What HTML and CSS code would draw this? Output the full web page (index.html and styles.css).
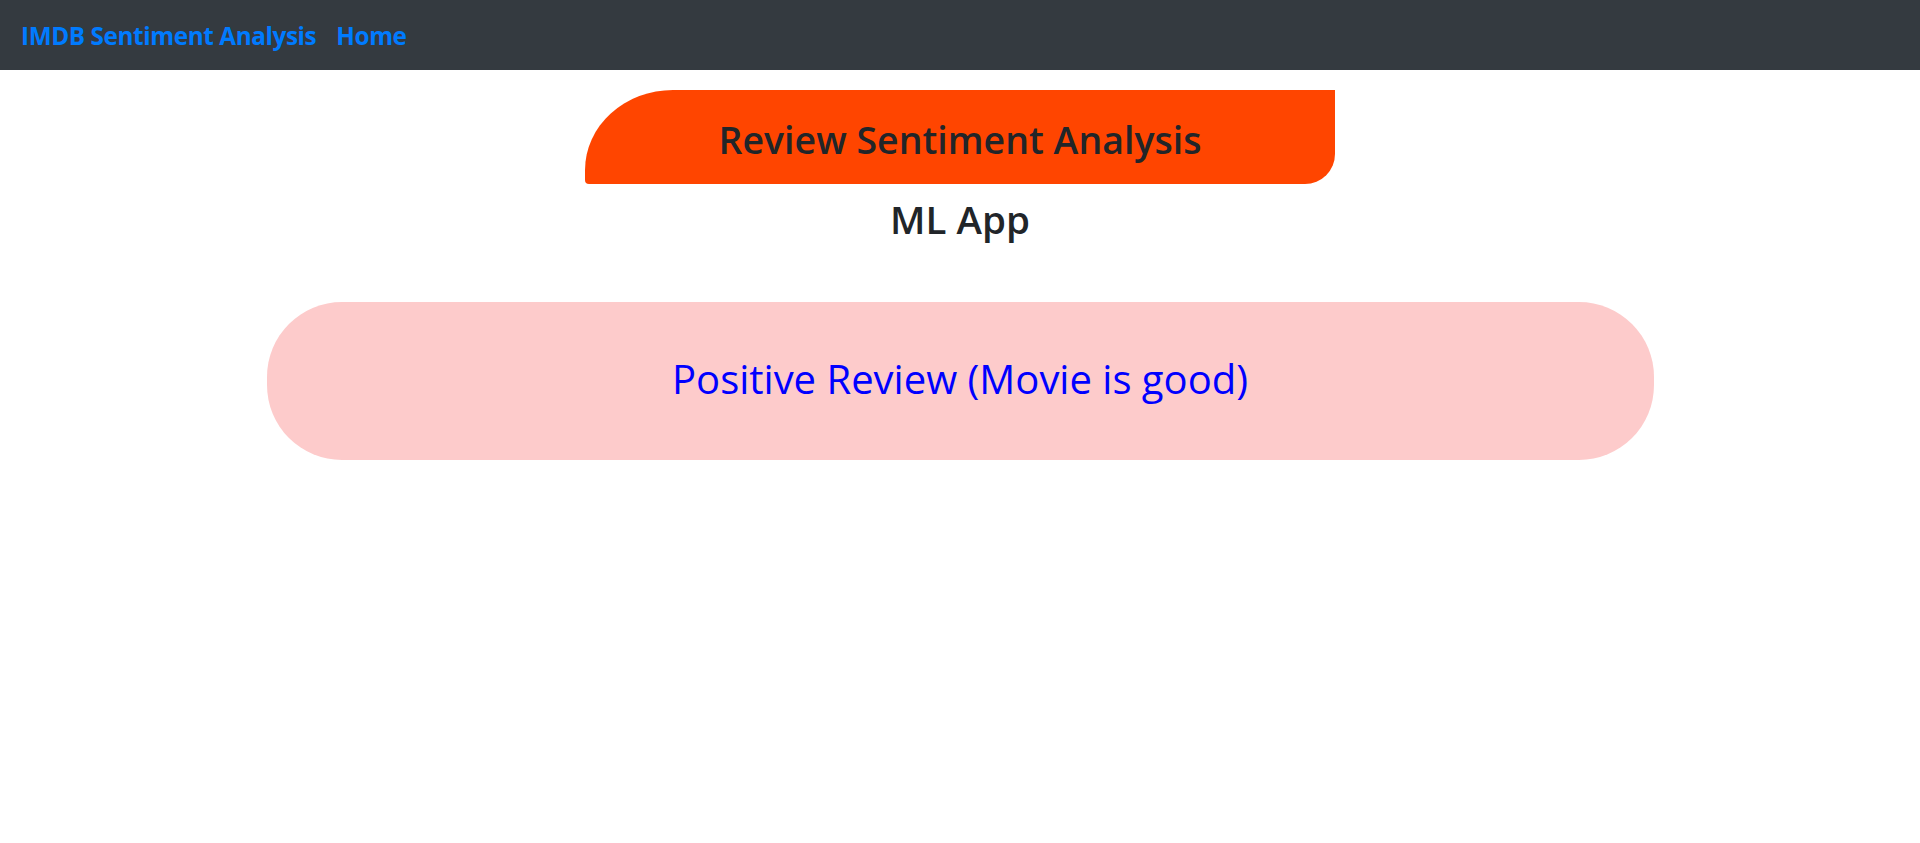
FILE: index.html
```html
<!DOCTYPE html>
<html lang="en">
<head>
<meta charset="utf-8">
<title>IMDB Sentiment Analysis</title>
<link rel="stylesheet" href="styles.css">
</head>
<body>
<nav class="navbar">
  <a class="brand" href="#">IMDB Sentiment Analysis</a>
  <a class="nav-link" href="#">Home</a>
</nav>
<main class="page">
  <div class="title-box"><h2 class="title">Review Sentiment Analysis</h2></div>
  <h2 class="subtitle">ML App</h2>
  <div class="container">
    <div class="result"><h2 class="result-text">Positive Review (Movie is good)</h2></div>
  </div>
</main>
</body>
</html>
```
FILE: styles.css
```css
* { box-sizing: border-box; }
html, body { margin: 0; padding: 0; }
body {
  font-family: "Open Sans", "Noto Sans", "Liberation Sans", sans-serif;
  color: #212529;
  background: #fff;
}
.navbar {
  height: 70px;
  background: #343a40;
  display: flex;
  align-items: center;
  padding: 0 0 0 21px;
  gap: 20px;
}
.navbar a {
  text-decoration: none;
  color: #007bff;
  font-weight: 700;
  font-size: 24.3px;
  letter-spacing: -0.4px;
}
.page {
  display: flex;
  flex-direction: column;
  align-items: center;
}
.title-box {
  margin-top: 20px;
  width: 750px;
  height: 94px;
  background: #ff4500;
  border-radius: 88px 0 30px 4px / 80px 0 30px 4px;
  display: flex;
  align-items: center;
  justify-content: center;
  padding-top: 4px;
}
.title, .subtitle, .result-text {
  margin: 0;
  font-weight: 600;
  font-size: 37.5px;
  line-height: 1.2;
}
.subtitle { margin-top: 12px; font-size: 38.5px; }
.container {
  width: 1387px;
  margin-top: 60px;
}
.result {
  height: 158px;
  background: #fdcbcb;
  border-radius: 75px;
  display: flex;
  align-items: center;
  justify-content: center;
  padding-bottom: 4px;
}
.result-text {
  color: #0000ff;
  font-weight: 400;
  font-size: 40px;
}
```
